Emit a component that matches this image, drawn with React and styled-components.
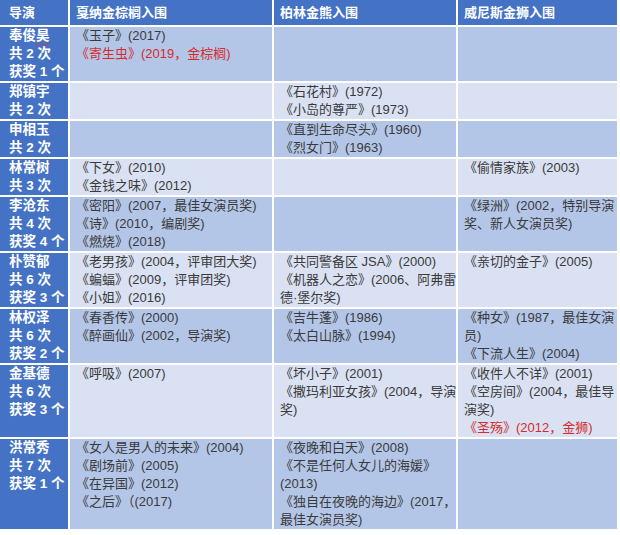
import React from 'react';
import styled, { createGlobalStyle } from 'styled-components';

const GlobalStyle = createGlobalStyle`
    body {
        margin: 0;
        background: #ffffff;
        font-family: "Liberation Sans", "Noto Sans CJK SC", sans-serif;
    }
`;

const BLUE = "#4472c4";
const DARK = "#b4c6e7";
const LIGHT = "#d9e1f2";

const Table = styled.div`
    display: grid;
    grid-template-columns: 68px 202px 182px 159px;
    gap: 2px;
    width: 617px;
    background: #ffffff;
`;

const HeadCell = styled.div`
    height: 25px;
    line-height: 25px;
    padding-left: ${ (p) => (p.$first ? "9px" : "6px") };
    background: ${ BLUE };
    color: #ffffff;
    font-weight: bold;
    font-size: 13px;
    white-space: nowrap;
`;

const SideCell = styled.div`
    padding-left: 9px;
    background: ${ BLUE };
    color: #ffffff;
    font-weight: bold;
    font-size: 13.5px;
    line-height: 18px;
    white-space: nowrap;
`;

const Cell = styled.div`
    padding-left: 6px;
    background: ${ (p) => (p.$tone === "dark" ? DARK : LIGHT) };
    font-size: 13px;
    line-height: 18px;
    white-space: nowrap;
`;

const Film = styled.div`
    color: ${ (p) => (p.$red ? "#d42c2c" : "#3a3a3a") };
`;

const Typo = styled.span`
    text-decoration: underline wavy #d9342b;
    text-decoration-thickness: 1px;
    text-underline-offset: 2px;
`;

const rows = [
    {
        name: ["奉俊", <Typo key="t">昊</Typo>], count: "共 2 次", won: "获奖 1 个", tone: "dark",
        cannes: [{ t: "《玉子》(2017)" }, { t: "《寄生虫》(2019，金棕榈)", red: true }],
        berlin: [], venice: [],
    },
    {
        name: "郑镇宇", count: "共 2 次", tone: "light",
        cannes: [], berlin: [{ t: "《石花村》(1972)" }, { t: "《小岛的尊严》(1973)" }], venice: [],
    },
    {
        name: "申相玉", count: "共 2 次", tone: "dark",
        cannes: [], berlin: [{ t: "《直到生命尽头》(1960)" }, { t: "《烈女门》(1963)" }], venice: [],
    },
    {
        name: "林常树", count: "共 3 次", tone: "light",
        cannes: [{ t: "《下女》(2010)" }, { t: "《金钱之味》(2012)" }],
        berlin: [], venice: [{ t: "《偷情家族》(2003)" }],
    },
    {
        name: "李沧东", count: "共 4 次", won: "获奖 4 个", tone: "dark",
        cannes: [{ t: "《密阳》(2007，最佳女演员奖)" }, { t: "《诗》(2010，编剧奖)" }, { t: "《燃烧》(2018)" }],
        berlin: [], venice: [{ t: ["《绿洲》(2002，特别导演", "奖、新人女演员奖)"] }],
    },
    {
        name: "朴赞郁", count: "共 6 次", won: "获奖 3 个", tone: "light",
        cannes: [{ t: "《老男孩》(2004，评审团大奖)" }, { t: "《蝙蝠》(2009，评审团奖)" }, { t: "《小姐》(2016)" }],
        berlin: [{ t: "《共同警备区 JSA》(2000)" }, { t: ["《机器人之恋》(2006、阿弗雷", "德·堡尔奖)"] }],
        venice: [{ t: "《亲切的金子》(2005)" }],
    },
    {
        name: "林权泽", count: "共 6 次", won: "获奖 2 个", tone: "dark",
        cannes: [{ t: "《春香传》(2000)" }, { t: "《醉画仙》(2002，导演奖)" }],
        berlin: [{ t: "《吉牛蓬》(1986)" }, { t: "《太白山脉》(1994)" }],
        venice: [{ t: ["《种女》(1987，最佳女演", "员)"] }, { t: "《下流人生》(2004)" }],
    },
    {
        name: "金基德", count: "共 6 次", won: "获奖 3 个", tone: "light",
        cannes: [{ t: "《呼吸》(2007)" }],
        berlin: [{ t: "《坏小子》(2001)" }, { t: ["《撒玛利亚女孩》(2004，导演", "奖)"] }],
        venice: [{ t: "《收件人不详》(2001)" }, { t: ["《空房间》(2004，最佳导", "演奖)"] }, { t: "《圣殇》(2012，金狮)", red: true }],
    },
    {
        name: "洪常秀", count: "共 7 次", won: "获奖 1 个", tone: "dark",
        cannes: [{ t: "《女人是男人的未来》(2004)" }, { t: "《剧场前》(2005)" }, { t: "《在异国》(2012)" }, { t: "《之后》（(2017)" }],
        berlin: [{ t: "《夜晚和白天》(2008)" }, { t: ["《不是任何人女儿的海媛》", "(2013)"] }, { t: ["《独自在夜晚的海边》(2017，", "最佳女演员奖)"] }],
        venice: [],
    },
];

const Films = ({ list }) => (
    <>
        { list.map((f, i) => (
            <Film key={ i } $red={ f.red }>
                { Array.isArray(f.t) ? f.t.map((l, j) => <div key={ j }>{ l }</div>) : f.t }
            </Film>
        )) }
    </>
);

const App = () => {
    return (
        <>
            <GlobalStyle />
            <Table>
                <HeadCell $first>导演</HeadCell>
                <HeadCell>戛纳金棕榈入围</HeadCell>
                <HeadCell>柏林金熊入围</HeadCell>
                <HeadCell>威尼斯金狮入围</HeadCell>
                { rows.map((r, i) => (
                    <React.Fragment key={ i }>
                        <SideCell>
                            <div>{ r.name }</div>
                            <div>{ r.count }</div>
                            { r.won && <div>{ r.won }</div> }
                        </SideCell>
                        <Cell $tone={ r.tone }><Films list={ r.cannes } /></Cell>
                        <Cell $tone={ r.tone }><Films list={ r.berlin } /></Cell>
                        <Cell $tone={ r.tone }><Films list={ r.venice } /></Cell>
                    </React.Fragment>
                )) }
            </Table>
        </>
    );
};

export default App;
